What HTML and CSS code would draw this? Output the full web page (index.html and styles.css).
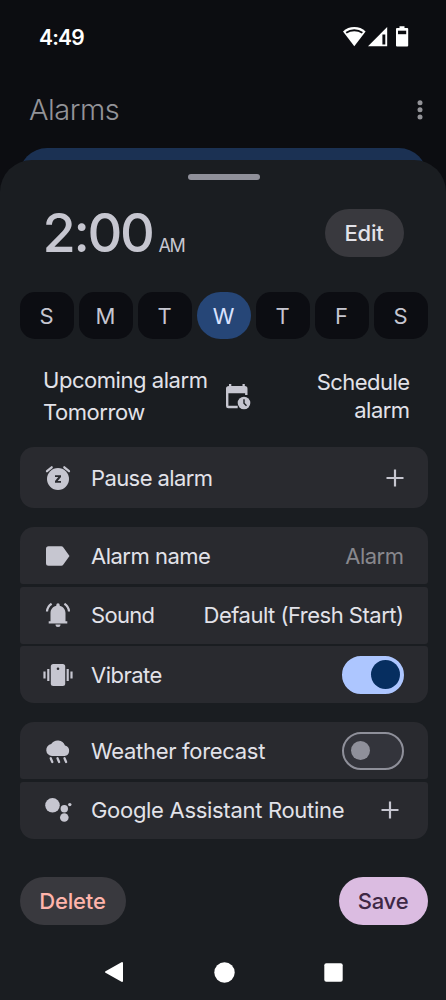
FILE: index.html
```html
<!DOCTYPE html>
<html lang="en">
    <head>
        <meta charset="UTF-8">
        <title>Alarms</title>
        <link rel="stylesheet" href="styles.css">
    </head>
    <body>
        <div class="screen">
            <div class="status-bar">
                <span class="clock">4:49</span>
                <svg class="status-icons" width="66" height="22" viewBox="0 0 66 22" fill="#fff">
                    <path d="M0 5.400C3 2.500 7 1 11.300 1s8.300 1.500 11.300 4.400L11.300 20.300z"/>
                    <path d="M3.200 6.800C8 3.400 14.500 3.400 19.400 6.800" fill="none" stroke="#0c0d11" stroke-width="1.800"/>
                    <path d="M44.200 1v19.300H25z"/>
                    <path d="M39.400 8.500h2.900v10h-2.900z" fill="#0c0d11"/>
                    <path d="M56.500 .3h5v1.700h2.700q1 0 1 1v16.500q0 1-1 1H54q-1 0-1-1V3q0-1 1-1h2.500z"/>
                    <path d="M55 4.700h8.200v3.500H55z" fill="#0c0d11"/>
                </svg>
            </div>

            <div class="app-bar">
                <h1>Alarms</h1>
                <svg width="6" height="20" viewBox="0 0 6 20" fill="#939398">
                    <circle cx="3" cy="2.700" r="2.500"/>
                    <circle cx="3" cy="9.800" r="2.500"/>
                    <circle cx="3" cy="17" r="2.500"/>
                </svg>
            </div>

            <div class="alarm-card"></div>

            <div class="sheet">
                <div class="handle"></div>

                <div class="time-row">
                    <div class="time">2:00</div>
                    <div class="ampm">AM</div>
                    <button class="btn edit">Edit</button>
                </div>

                <div class="days">
                    <button class="day">S</button>
                    <button class="day">M</button>
                    <button class="day">T</button>
                    <button class="day selected">W</button>
                    <button class="day">T</button>
                    <button class="day">F</button>
                    <button class="day">S</button>
                </div>

                <div class="schedule">
                    <div class="upcoming">Upcoming alarm<br>Tomorrow</div>
                    <svg width="26" height="27" viewBox="0 0 26 27">
                        <path d="M4 1h2.300v2h11.200V1h2.300v2q2.700 0 2.700 2.700V12h-2.400v-1.800H3.400v12.600h9.300v2.500H3.300Q1 25.300 1 23V5.600Q1 3 4 3z" fill="#c6c6d0"/>
                        <circle cx="19" cy="20" r="6.300" fill="#c6c6d0"/>
                        <path d="M19 16.200v4l2.500 2.500" fill="none" stroke="#1a1d21" stroke-width="1.400"/>
                    </svg>
                    <div class="schedule-link">Schedule<br>alarm</div>
                </div>

                <div class="group">
                    <div class="row pause">
                        <svg class="icon" width="30" height="26" viewBox="0 0 30 26" fill="#c6c6d0">
                            <circle cx="15" cy="14" r="11"/>
                            <path d="M4 6.200L8.700 2.300M26 6.200L21.300 2.300" stroke="#c6c6d0" stroke-width="2.300" stroke-linecap="round"/>
                            <path d="M12 10.200h6v1.700l-3.300 4h3.300v1.900h-6v-1.700l3.300-4H12z" fill="#292a2f"/>
                        </svg>
                        <span class="label l-pause">Pause alarm</span>
                        <svg class="plus" width="18" height="18" viewBox="0 0 18 18"><path d="M9 .5v17M.5 9h17" stroke="#c6c6d0" stroke-width="2.200"/></svg>
                    </div>
                </div>

                <div class="group">
                    <div class="row">
                        <svg class="icon" width="30" height="26" viewBox="0 0 30 26" fill="#c6c6d0">
                            <path d="M5.500 3.300h12.700q1.400 0 2.200 1.200l6.100 8.500-6.100 8.500q-.8 1.200-2.200 1.200H5.500Q3 22.700 3 20.200V5.800Q3 3.300 5.500 3.300z"/>
                        </svg>
                        <span class="label l-name">Alarm name</span>
                        <span class="value hint">Alarm</span>
                    </div>
                    <div class="row">
                        <svg class="icon" width="30" height="26" viewBox="0 0 30 26" fill="#c6c6d0">
                            <path d="M13.300 2.900a1.700 1.700 0 0 1 3.400 0v.8c3.700.8 5.800 3.800 5.800 7.300v8.200h1.800v2.200H5.700v-2.200h1.800V11c0-3.500 2.100-6.500 5.800-7.300z"/>
                            <path d="M12.500 22.500h5a2.500 2.500 0 0 1-5 0z"/>
                            <path d="M4 9.500C4.200 6 5.800 3.500 8.600 1.700M26 9.500C25.800 6 24.200 3.500 21.400 1.700" fill="none" stroke="#c6c6d0" stroke-width="2.200"/>
                        </svg>
                        <span class="label l-sound">Sound</span>
                        <span class="value sound">Default (Fresh Start)</span>
                    </div>
                    <div class="row">
                        <svg class="icon" width="30" height="26" viewBox="0 0 30 26" fill="#c6c6d0">
                            <rect x="7.800" y="2" width="14.400" height="22" rx="2.500"/>
                            <path d="M1.500 9.500v7M5.300 7v12M24.700 7v12M28.500 9.500v7" stroke="#c6c6d0" stroke-width="2.200"/>
                            <circle cx="15" cy="6.800" r="1.300" fill="#292a2f"/>
                        </svg>
                        <span class="label l-vibrate">Vibrate</span>
                        <span class="toggle on"></span>
                    </div>
                </div>

                <div class="group">
                    <div class="row">
                        <svg class="icon" width="30" height="26" viewBox="0 0 30 26" fill="#c6c6d0">
                            <path d="M9 18a6 6 0 0 1-.8-11.900A7.800 7.800 0 0 1 22 7.400 5.400 5.400 0 0 1 21.500 18z"/>
                            <path d="M7.700 20.300l1.600 3.700M14.500 20.300l1.600 3.700M21.500 20.300l1.600 3.700" stroke="#c6c6d0" stroke-width="2.300" stroke-linecap="round"/>
                        </svg>
                        <span class="label l-weather">Weather forecast</span>
                        <span class="toggle"></span>
                    </div>
                    <div class="row">
                        <svg class="icon" width="30" height="26" viewBox="0 0 30 26" fill="#c6c6d0">
                            <circle cx="9.500" cy="8.300" r="7.300"/>
                            <circle cx="21.300" cy="11.700" r="3.700"/>
                            <circle cx="21.300" cy="20.500" r="4.300"/>
                            <circle cx="26.800" cy="7.600" r="1.700"/>
                        </svg>
                        <span class="label l-assistant">Google Assistant Routine</span>
                        <svg class="plus inset" width="18" height="18" viewBox="0 0 18 18"><path d="M9 .5v17M.5 9h17" stroke="#c6c6d0" stroke-width="2.200"/></svg>
                    </div>
                </div>

                <div class="actions">
                    <button class="btn delete">Delete</button>
                    <button class="btn save">Save</button>
                </div>

                <div class="nav-bar">
                    <svg width="20" height="22" viewBox="0 0 20 22"><path d="M2 11l16-9v18z" fill="#fff" stroke="#fff" stroke-width="2" stroke-linejoin="round"/></svg>
                    <svg width="21" height="21" viewBox="0 0 21 21"><circle cx="10.500" cy="10.500" r="10.200" fill="#fff"/></svg>
                    <svg width="19" height="19" viewBox="0 0 19 19"><rect x=".3" y=".3" width="18.400" height="18.400" rx="2" fill="#fff"/></svg>
                </div>
            </div>
        </div>
    </body>
</html>
```
FILE: styles.css
```css
* {
    box-sizing: border-box;
}

body {
    margin: 0;
    background-color: #0c0d11;
    color: #e2e2e9;
    font-family: Inter, Roboto, sans-serif;
    font-size: 22px;
}

.screen {
    display: flex;
    flex-direction: column;
    width: 446px;
    height: 1000px;
    overflow: hidden;
}

.status-bar {
    display: flex;
    justify-content: space-between;
    align-items: center;
    height: 74px;
    padding: 0 37px 0 39px;
}

.clock {
    color: white;
    font-size: 21px;
    font-weight: 600;
    letter-spacing: -0.8px;
}

.app-bar {
    display: flex;
    justify-content: space-between;
    align-items: center;
    height: 74px;
    padding: 0 23px 2px 29px;
}

.app-bar h1 {
    margin: 0;
    color: #939398;
    font-size: 29px;
    font-weight: 350;
    line-height: 34px;
    letter-spacing: -0.5px;
}

.alarm-card {
    height: 40px;
    margin: 0 19px -28px;
    background-color: #1b3153;
    border-radius: 28px 28px 0 0;
}

.sheet {
    flex: 1;
    display: flex;
    flex-direction: column;
    padding: 14px 18.5px 0 19.5px;
    background-color: #1a1d21;
    border-radius: 32px 32px 0 0;
}

.handle {
    width: 72px;
    height: 6px;
    margin: 0 auto;
    background-color: #8f909a;
    border-radius: 3px;
}

.time-row {
    display: flex;
    align-items: flex-end;
    height: 48px;
    margin-top: 29px;
    padding: 0 24px 0 23px;
}

.time {
    width: 116px;
    color: #c6c6d0;
    font-size: 54px;
    font-weight: 500;
    line-height: 48px;
    letter-spacing: -2.3px;
}

.ampm {
    color: #c6c6d0;
    font-size: 18px;
    line-height: 22px;
    letter-spacing: -1.3px;
}

.btn {
    height: 48px;
    padding: 0;
    border: none;
    border-radius: 24px;
    background-color: #39393e;
    color: #e2e2e9;
    font-family: inherit;
    font-size: 22px;
    font-weight: 500;
    letter-spacing: -0.2px;
    cursor: pointer;
}

.btn.edit {
    width: 79px;
    margin-left: auto;
}

.days {
    display: flex;
    gap: 5px;
    height: 47px;
    margin-top: 35px;
}

.day {
    flex: 1;
    padding: 0;
    border: none;
    border-radius: 15px;
    background-color: #0c0d12;
    color: #c6c6d0;
    font-family: inherit;
    font-size: 22px;
    cursor: pointer;
}

.day.selected {
    border-radius: 24px;
    background-color: #264677;
    color: #d9e2ff;
}

.schedule {
    display: flex;
    align-items: center;
    height: 64px;
    margin-top: 25px;
    padding: 0 18px 0 23.5px;
}

.upcoming {
    width: 182px;
    line-height: 32px;
    letter-spacing: -0.45px;
}

.schedule-link {
    margin-left: auto;
    line-height: 28px;
    text-align: right;
    letter-spacing: -0.55px;
}

.group {
    display: flex;
    flex-direction: column;
    gap: 2.5px;
    margin-top: 19px;
    border-radius: 14px;
    overflow: hidden;
}

.row {
    display: flex;
    align-items: center;
    height: 57px;
    padding: 0 24px 0 23px;
    background-color: #292a2f;
    border-radius: 3px;
}

.row.pause {
    height: 61px;
}

.icon {
    flex: none;
    margin-right: 18.5px;
}

.label {
    white-space: nowrap;
    letter-spacing: -0.3px;
}

.l-pause {
    letter-spacing: -0.6px;
}

.l-name,
.l-vibrate {
    letter-spacing: -0.5px;
}

.l-sound {
    letter-spacing: -0.7px;
}

.value {
    margin-left: auto;
    white-space: nowrap;
    letter-spacing: -0.5px;
}

.value.hint {
    color: #88888d;
}

.plus {
    flex: none;
    margin-left: auto;
}

.plus.inset {
    margin-right: 5px;
}

.toggle {
    display: flex;
    align-items: center;
    width: 62px;
    height: 38px;
    margin-left: auto;
    padding-left: 7px;
    border: 2px solid #8f909a;
    border-radius: 19px;
    background-color: #33343b;
}

.toggle::after {
    content: "";
    width: 19px;
    height: 19px;
    border-radius: 50%;
    background-color: #8f909a;
}

.toggle.on {
    padding-left: 27px;
    border-color: #adc6ff;
    background-color: #adc6ff;
}

.toggle.on::after {
    width: 29px;
    height: 29px;
    background-color: #062e60;
}

.actions {
    display: flex;
    justify-content: space-between;
    margin-top: 38px;
}

.btn.delete {
    width: 106px;
    color: #ffb4ab;
}

.btn.save {
    width: 89px;
    background-color: #dbbce1;
    color: #3e2845;
}

.nav-bar {
    display: flex;
    justify-content: space-between;
    align-items: center;
    width: 239px;
    margin: 36.5px auto 0;
}
```
